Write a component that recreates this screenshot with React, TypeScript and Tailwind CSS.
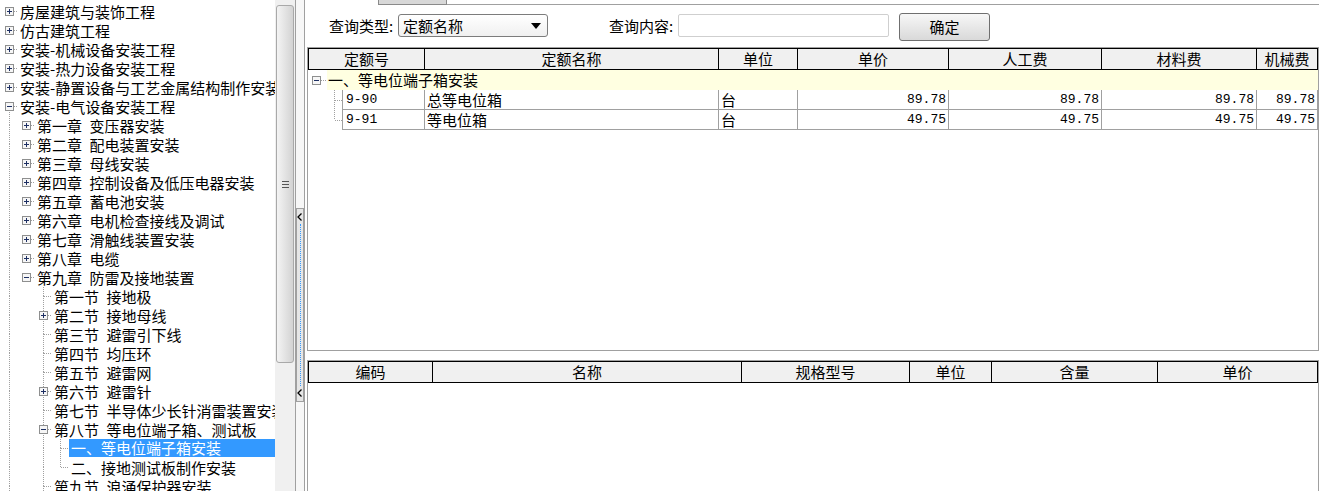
import React from "react";

type Sign = "+" | "-";

const dot = { stroke: "#a0a0a0", strokeDasharray: "1 1", strokeWidth: 1 };

function Glyph({
  w,
  p,
  h = 19,
  up,
  down,
  right,
  sign,
}: {
  w: number;
  p: number;
  h?: number;
  up?: boolean;
  down?: boolean;
  right?: boolean;
  sign?: Sign;
}) {
  const q = Math.floor(h / 2);
  return (
    <svg width={w} height={h} className="block shrink-0">
      {up && <line x1={p + 0.5} y1={0} x2={p + 0.5} y2={q} {...dot} />}
      {down && <line x1={p + 0.5} y1={q} x2={p + 0.5} y2={h} {...dot} />}
      {right && (
        <line x1={sign ? p + 5 : p + 1} y1={q + 0.5} x2={w} y2={q + 0.5} {...dot} />
      )}
      {sign && (
        <g>
          <rect x={p - 3.5} y={q - 3.5} width={8} height={8} fill="#f6f6f6" stroke="#8e8f8f" />
          <line x1={p - 2} y1={q + 0.5} x2={p + 3} y2={q + 0.5} stroke="#1d2f63" />
          {sign === "+" && (
            <line x1={p + 0.5} y1={q - 2} x2={p + 0.5} y2={q + 3} stroke="#1d2f63" />
          )}
        </g>
      )}
    </svg>
  );
}

type Node = { t: string; l: number; s?: Sign; end?: boolean; sel?: boolean };

const tree: Node[] = [
  { t: "房屋建筑与装饰工程", l: 0, s: "+" },
  { t: "仿古建筑工程", l: 0, s: "+" },
  { t: "安装-机械设备安装工程", l: 0, s: "+" },
  { t: "安装-热力设备安装工程", l: 0, s: "+" },
  { t: "安装-静置设备与工艺金属结构制作安装工程", l: 0, s: "+" },
  { t: "安装-电气设备安装工程", l: 0, s: "-" },
  { t: "第一章 变压器安装", l: 1, s: "+" },
  { t: "第二章 配电装置安装", l: 1, s: "+" },
  { t: "第三章 母线安装", l: 1, s: "+" },
  { t: "第四章 控制设备及低压电器安装", l: 1, s: "+" },
  { t: "第五章 蓄电池安装", l: 1, s: "+" },
  { t: "第六章 电机检查接线及调试", l: 1, s: "+" },
  { t: "第七章 滑触线装置安装", l: 1, s: "+" },
  { t: "第八章 电缆", l: 1, s: "+" },
  { t: "第九章 防雷及接地装置", l: 1, s: "-" },
  { t: "第一节 接地极", l: 2 },
  { t: "第二节 接地母线", l: 2, s: "+" },
  { t: "第三节 避雷引下线", l: 2 },
  { t: "第四节 均压环", l: 2 },
  { t: "第五节 避雷网", l: 2 },
  { t: "第六节 避雷针", l: 2, s: "+" },
  { t: "第七节 半导体少长针消雷装置安装", l: 2 },
  { t: "第八节 等电位端子箱、测试板", l: 2, s: "-" },
  { t: "一、等电位端子箱安装", l: 3, sel: true },
  { t: "二、接地测试板制作安装", l: 3, end: true },
  { t: "第九节 浪涌保护器安装", l: 2 },
];

const widths = [18, 17, 17, 17];
const centers = [9, 8, 8, 8];

function TreeRow({ node }: { node: Node }) {
  const cells: React.ReactNode[] = [];
  for (let i = 0; i < node.l; i++) {
    const line = i === 0 || (i === 2 && node.l === 3);
    cells.push(<Glyph key={i} w={widths[i]} p={centers[i]} up={line} down={line} />);
  }
  const i = node.l;
  const up = node.l >= 2;
  const down = node.l === 0 ? node.s === "-" : node.l >= 2 && !node.end;
  cells.push(
    <Glyph key="own" w={widths[i]} p={centers[i]} up={up} down={down} right sign={node.s} />
  );
  return (
    <div className="flex h-[19px] items-center whitespace-nowrap">
      {cells}
      {node.sel ? (
        <span className="h-[18px] flex-1 self-start bg-[#3399ff] pl-[2px] leading-[18px] text-white">
          {node.t}
        </span>
      ) : (
        <span className="pl-[2px] leading-[19px]">{node.t.replace(" ", "\u2002")}</span>
      )}
    </div>
  );
}

const topHead = ["定额号", "定额名称", "单位", "单价", "人工费", "材料费", "机械费"];
const topRows = [
  { id: "9-90", name: "总等电位箱", unit: "台", v: "89.78" },
  { id: "9-91", name: "等电位箱", unit: "台", v: "49.75" },
];
const bottomHead = ["编码", "名称", "规格型号", "单位", "含量", "单价"];

const mono = "[font-family:'Liberation_Mono',monospace] text-[13px]";

function Chevron() {
  return (
    <svg width="6" height="8" className="block">
      <polyline points="4.5,0.5 1,4 4.5,7.5" fill="none" stroke="#000" strokeWidth="1.3" />
    </svg>
  );
}

export default function App() {
  return (
    <div className="flex h-[491px] w-[1319px] overflow-hidden bg-white text-[15px] text-black [font-family:'Noto_Sans_CJK_SC',sans-serif]">
      {/* tree */}
      <div className="w-[275px] shrink-0 overflow-hidden pt-[2px]">
        {tree.map((n, i) => (
          <TreeRow key={i} node={n} />
        ))}
      </div>

      {/* scrollbar */}
      <div className="w-[20px] shrink-0 bg-[#f0f0f0] px-[1px] pt-[5px]">
        <div className="flex h-[358px] items-center justify-center rounded-[3px] border border-[#a9a9a9] bg-linear-to-r from-[#f4f4f4] to-[#d3d3d3]">
          <div className="flex flex-col gap-[2px]">
            <div className="h-px w-[7px] bg-[#555]" />
            <div className="h-px w-[7px] bg-[#555]" />
            <div className="h-px w-[7px] bg-[#555]" />
          </div>
        </div>
      </div>
      <div className="w-px shrink-0 bg-[#a0a0a0]" />

      {/* splitter */}
      <div className="w-[8px] shrink-0 bg-[#f7f7f7]">
        <div className="mt-[208px] flex h-[194px] flex-col items-center border border-[#a0a0a0] bg-[#e6e6e6] py-[4px]">
          <Chevron />
          <div className="my-[3px] flex-1 border-l border-dotted border-[#3399ff]" />
          <Chevron />
        </div>
      </div>
      <div className="w-px shrink-0 bg-[#a0a0a0]" />

      {/* right side */}
      <div className="flex min-w-0 flex-1 flex-col">
        <div className="flex h-[5px]">
          <div className="w-[73px]" />
          <div className="w-[69px] border-x border-b border-[#8a8a8a] bg-[#d8d8d8]" />
          <div className="flex-1 border-b border-[#a0a0a0]" />
        </div>

        <div className="mt-[8px] flex h-[28px] items-start pl-[24px]">
          <span className="mt-[1px] w-[69px] leading-[23px]">查询类型:</span>
          <div className="mt-[1px] flex h-[23px] w-[150px] items-center justify-between rounded-[3px] border border-[#7c7c7c] bg-linear-to-b from-white to-[#f0f0f0] pl-[4px] pr-[6px]">
            <span className="leading-[21px]">定额名称</span>
            <svg width="10" height="6" className="block">
              <polygon points="0,0 10,0 5,6" fill="#000" />
            </svg>
          </div>
          <span className="ml-[61px] mt-[1px] w-[69px] leading-[23px]">查询内容:</span>
          <div className="mt-[1px] h-[23px] w-[211px] rounded-[2px] border border-[#cfcfcf] bg-white" />
          <button className="ml-[10px] h-[28px] w-[91px] rounded-[3px] border border-[#6f6f6f] bg-linear-to-b from-[#f7f7f7] to-[#d9d9d9] leading-[26px]">
            确定
          </button>
        </div>

        {/* quota table */}
        <div className="ml-[2px] mt-[6px] flex h-[304px] w-[1012px] shrink-0 flex-col border border-[#a0a0a0]">
          <div className="grid h-[22px] grid-cols-[116px_294px_79px_151px_153px_155px_60px] border border-black bg-[#f0f0f0]">
            {topHead.map((h, i) => (
              <div
                key={h}
                className={`text-center leading-[20px] ${i < topHead.length - 1 ? "border-r border-black" : ""}`}
              >
                {h}
              </div>
            ))}
          </div>
          <div className="flex h-[20px]">
            <Glyph w={19} p={8} h={20} right sign="-" />
            <div className="flex-1 bg-[#ffffe1] pl-[1px] leading-[20px]">一、等电位端子箱安装</div>
          </div>
          {topRows.map((r, i) => (
            <div key={r.id} className="flex h-[20px]">
              <Glyph w={34} p={26} h={20} up down={i === 0} right />
              <div className="grid flex-1 grid-cols-[83px_294px_79px_151px_153px_155px_61px]">
                <div className={`border-x border-b border-[#a0a0a0] pl-[3px] leading-[19px] ${mono}`}>{r.id}</div>
                <div className="border-r border-b border-[#a0a0a0] pl-[2px] leading-[19px]">{r.name}</div>
                <div className="border-r border-b border-[#a0a0a0] pl-[2px] leading-[19px]">{r.unit}</div>
                {[0, 1, 2, 3].map((k) => (
                  <div
                    key={k}
                    className={`border-r border-b border-[#a0a0a0] pr-[2px] text-right leading-[19px] ${mono}`}
                  >
                    {r.v}
                  </div>
                ))}
              </div>
            </div>
          ))}
        </div>

        {/* material table */}
        <div className="ml-[2px] mt-[9px] w-[1012px] flex-1 border-x border-t border-[#a0a0a0]">
          <div className="grid h-[22px] grid-cols-[124px_309px_168px_82px_166px_159px] border border-black bg-[#f0f0f0]">
            {bottomHead.map((h, i) => (
              <div
                key={h + i}
                className={`text-center leading-[20px] ${i < bottomHead.length - 1 ? "border-r border-black" : ""}`}
              >
                {h}
              </div>
            ))}
          </div>
        </div>
      </div>
    </div>
  );
}
